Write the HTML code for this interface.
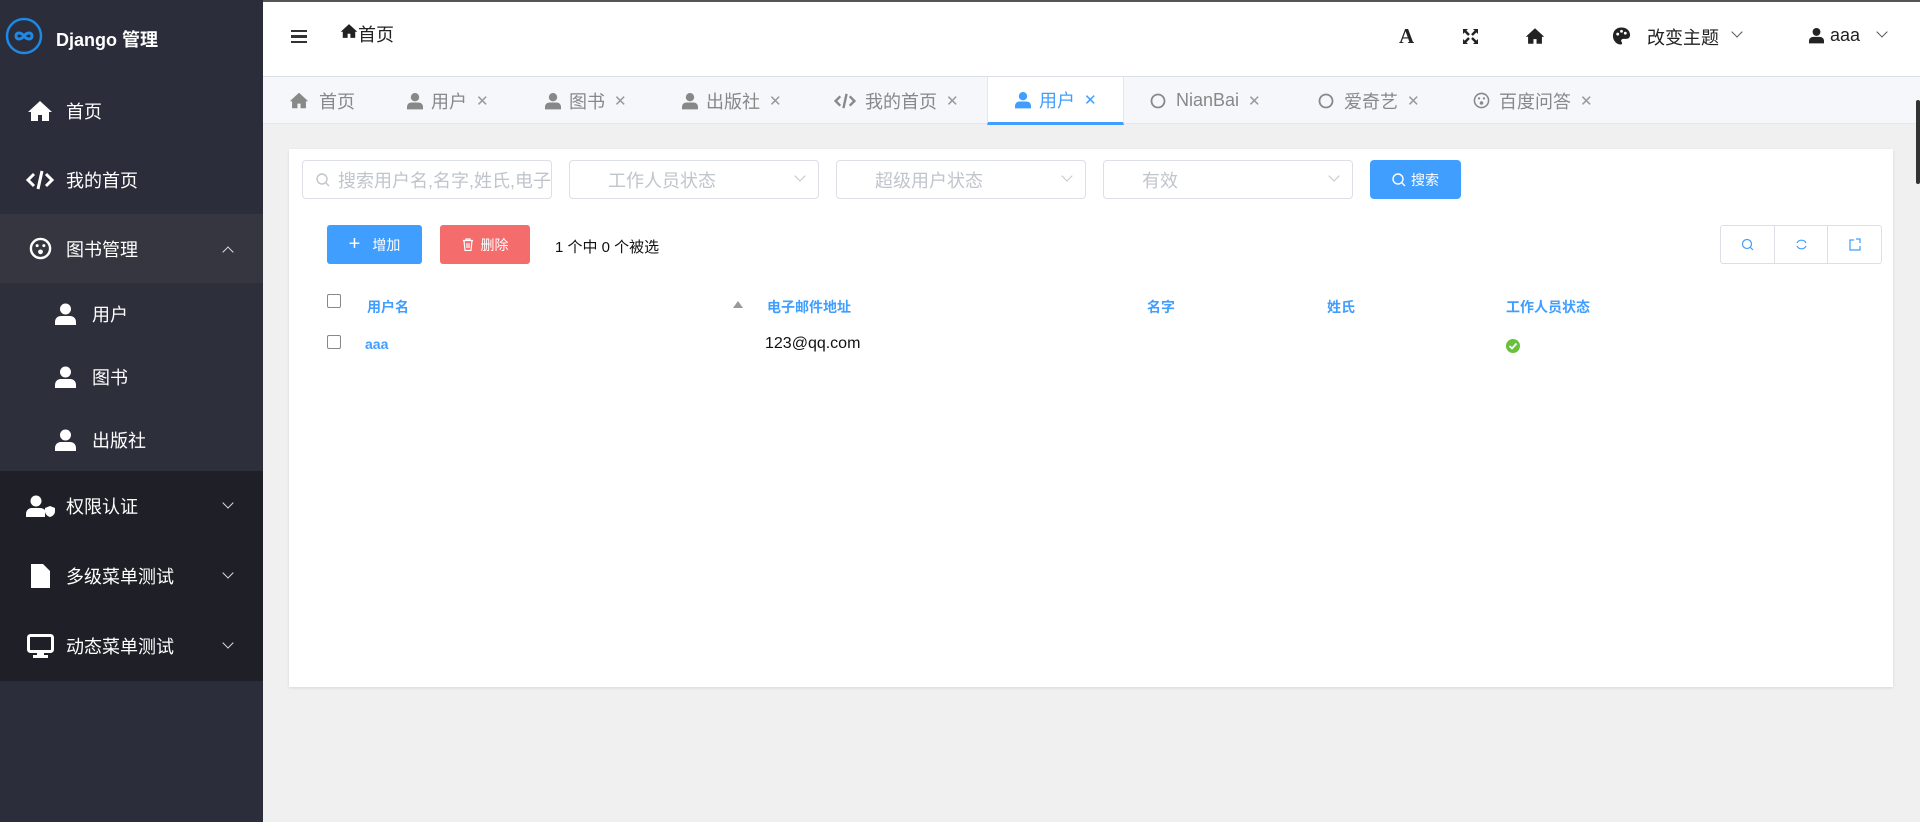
<!DOCTYPE html>
<html><head><meta charset="utf-8"><style>
*{box-sizing:border-box;margin:0;padding:0}
body{width:1920px;height:822px;overflow:hidden;background:#f0f0f0;font-family:"Liberation Sans","Noto Sans CJK SC",sans-serif;position:relative}
.abs{position:absolute}
#side{left:0;top:0;width:263px;height:822px;background:#2b2d3a}
.mi{position:absolute;left:0;width:263px;color:#fff;font-size:18px;display:flex;align-items:center}
.mi svg{position:absolute}
.mi span{position:absolute;left:66px}
.chev{position:absolute;left:224px;width:8px;height:8px;border-right:1.5px solid #ddd;border-bottom:1.5px solid #ddd;transform:rotate(45deg)}
.up{transform:rotate(-135deg)}
#top{left:263px;top:2px;width:1657px;height:74px;background:#fff}
#tabs{left:263px;top:76px;width:1657px;height:48px;background:#f5f7fa;border-top:1px solid #dcdfe6;border-bottom:1px solid #e4e7ed}
.tab{position:absolute;top:0;height:47px;display:flex;align-items:center;font-size:18px;color:#888}
.tab .x{font-size:15px;margin-left:9px;color:#999}
#card{left:289px;top:149px;width:1604px;height:538px;background:#fff;box-shadow:0 1px 3px rgba(0,0,0,.1)}
.inp{position:absolute;top:11px;height:39px;border:1px solid #dcdfe6;border-radius:4px;color:#c0c4cc;font-size:18px;display:flex;align-items:center}
.sel .v{position:absolute;right:14px;top:11px;width:8px;height:8px;border-right:1.5px solid #c0c4cc;border-bottom:1.5px solid #c0c4cc;transform:rotate(45deg)}
.th{position:absolute;top:148px;font-size:14px;font-weight:bold;color:#409eff}
.cb{position:absolute;width:14px;height:14px;border:1px solid #888;border-radius:2px;background:#fff}
</style></head><body>
<div class="abs" style="left:0;top:0;width:1920px;height:2px;background:#555"></div>
<div id="side" class="abs">
 <svg class="abs" style="left:5px;top:17px" width="38" height="38" viewBox="0 0 38 38"><circle cx="19" cy="19" r="17" fill="none" stroke="#1e88e5" stroke-width="2.5"/><path d="M19 19c-3-4-8-4-8 0s5 4 8 0c3-4 8-4 8 0s-5 4-8 0" fill="none" stroke="#1e88e5" stroke-width="3"/></svg>
 <div class="abs" style="left:56px;top:26px;color:#fff;font-size:18px;font-weight:bold">Django 管理</div>
 <div class="mi" style="top:76px;height:69px"><svg style="left:27px" width="26" height="22" viewBox="0 0 26 22"><path d="M13 1L1 12h3v9h7v-6h4v6h7v-9h3z" fill="#fff"/></svg><span>首页</span></div>
 <div class="mi" style="top:145px;height:69px"><svg style="left:26px" width="28" height="20" viewBox="0 0 28 20"><path d="M8 4L2 10l6 6M20 4l6 6-6 6M16 1l-4 18" stroke="#fff" stroke-width="3" fill="none"/></svg><span>我的首页</span></div>
 <div class="mi" style="top:214px;height:69px;background:#35363f"><svg style="left:29px" width="23" height="23" viewBox="0 0 24 24"><circle cx="12" cy="12" r="10" fill="none" stroke="#fff" stroke-width="2.5"/><circle cx="8.5" cy="9" r="1.6" fill="#fff"/><circle cx="15.5" cy="9" r="1.6" fill="#fff"/><circle cx="12" cy="15.5" r="2.5" fill="#fff"/></svg><span>图书管理</span><i class="chev up" style="top:34px"></i></div>
 <div class="abs" style="left:0;top:283px;width:263px;height:188px;background:#2d2f3b"></div>
 <div class="mi" style="top:283px;height:62px"><svg style="left:55px" width="21" height="22" viewBox="0 0 21 22"><circle cx="10.5" cy="6" r="5.5" fill="#fff"/><path d="M0 22v-3c0-4 3-6 6-6h9c3 0 6 2 6 6v3z" fill="#fff"/></svg><span style="left:92px">用户</span></div>
 <div class="mi" style="top:345px;height:63px"><svg style="left:55px" width="21" height="22" viewBox="0 0 21 22"><circle cx="10.5" cy="6" r="5.5" fill="#fff"/><path d="M0 22v-3c0-4 3-6 6-6h9c3 0 6 2 6 6v3z" fill="#fff"/></svg><span style="left:92px">图书</span></div>
 <div class="mi" style="top:408px;height:63px"><svg style="left:55px" width="21" height="22" viewBox="0 0 21 22"><circle cx="10.5" cy="6" r="5.5" fill="#fff"/><path d="M0 22v-3c0-4 3-6 6-6h9c3 0 6 2 6 6v3z" fill="#fff"/></svg><span style="left:92px">出版社</span></div>
 <div class="abs" style="left:0;top:471px;width:263px;height:210px;background:#1f1f27"></div>
 <div class="mi" style="top:471px;height:70px"><svg style="left:26px" width="30" height="22" viewBox="0 0 30 22"><circle cx="10" cy="6" r="5.5" fill="#fff"/><path d="M0 22v-3c0-4 3-6 6-6h8c2 0 4 1 5 2v7z" fill="#fff"/><path d="M24 11l5 2v3c0 3-2 5-5 6-3-1-5-3-5-6v-3z" fill="#fff"/></svg><span>权限认证</span><i class="chev" style="top:28px"></i></div>
 <div class="mi" style="top:541px;height:70px"><svg style="left:31px" width="19" height="24" viewBox="0 0 19 24"><path d="M0 0h12l7 7v17H0z" fill="#fff"/></svg><span>多级菜单测试</span><i class="chev" style="top:28px"></i></div>
 <div class="mi" style="top:611px;height:70px"><svg style="left:27px" width="27" height="24" viewBox="0 0 27 24"><rect x="1.5" y="1.5" width="24" height="16" rx="2" fill="none" stroke="#fff" stroke-width="3"/><rect x="10" y="18" width="7" height="3" fill="#fff"/><rect x="6" y="21" width="15" height="3" fill="#fff"/></svg><span>动态菜单测试</span><i class="chev" style="top:28px"></i></div>
</div>
<div id="top" class="abs">
 <div class="abs" style="left:28px;top:28px;width:16px;height:13px;border-top:2.5px solid #333;border-bottom:2.5px solid #333"><div style="margin-top:3px;height:2.5px;background:#333"></div></div>
 <svg class="abs" style="left:77px;top:21px" width="18" height="16" viewBox="0 0 26 22"><path d="M13 1L1 12h3v9h7v-6h4v6h7v-9h3z" fill="#222"/></svg>
 <div class="abs" style="left:95px;top:19px;font-size:18px;color:#222">首页</div>
 <div class="abs" style="left:1136px;top:22px;font-size:21px;font-weight:bold;font-family:'Liberation Serif',serif;color:#222">A</div>
 <svg class="abs" style="left:1199px;top:26px" width="17" height="17" viewBox="0 0 17 17"><path d="M1 1h5L1 6zM16 1h-5l5 5zM1 16h5l-5-5zM16 16h-5l5-5z" fill="#222"/><path d="M3 3l4 4M14 3l-4 4M3 14l4-4M14 14l-4-4" stroke="#222" stroke-width="2.5"/></svg>
 <svg class="abs" style="left:1262px;top:25px" width="20" height="18" viewBox="0 0 26 22"><path d="M13 1L1 12h3v9h7v-6h4v6h7v-9h3z" fill="#222"/></svg>
 <svg class="abs" style="left:1349px;top:24px" width="19" height="20" viewBox="0 0 20 20"><path d="M10 1C4 1 1 5 1 10s4 9 8 9c2 0 2-2 1-3s0-3 2-3h3c3 0 4-2 4-4 0-5-4-8-9-8z" fill="#222"/><circle cx="6" cy="8" r="1.5" fill="#fff"/><circle cx="10" cy="5" r="1.5" fill="#fff"/><circle cx="14" cy="7" r="1.5" fill="#fff"/></svg>
 <div class="abs" style="left:1384px;top:22px;font-size:18px;color:#222">改变主题</div>
 <i class="abs" style="left:1470px;top:26px;width:8px;height:8px;border-right:1.3px solid #555;border-bottom:1.3px solid #555;transform:rotate(45deg)"></i>
 <svg class="abs" style="left:1546px;top:25px" width="15" height="17" viewBox="0 0 21 22"><circle cx="10.5" cy="6" r="5.5" fill="#222"/><path d="M0 22v-3c0-4 3-6 6-6h9c3 0 6 2 6 6v3z" fill="#222"/></svg>
 <div class="abs" style="left:1567px;top:23px;font-size:18px;color:#222">aaa</div>
 <i class="abs" style="left:1615px;top:26px;width:8px;height:8px;border-right:1.3px solid #555;border-bottom:1.3px solid #555;transform:rotate(45deg)"></i>
</div>
<div id="tabs" class="abs">
 <div class="tab" style="left:26px"><svg width="20" height="17" viewBox="0 0 26 22" style="margin-right:10px"><path d="M13 1L1 12h3v9h7v-6h4v6h7v-9h3z" fill="#888"/></svg>首页</div>
 <div class="tab" style="left:144px"><svg width="16" height="18" viewBox="0 0 21 22" style="margin-right:8px"><circle cx="10.5" cy="6" r="5.5" fill="#888"/><path d="M0 22v-3c0-4 3-6 6-6h9c3 0 6 2 6 6v3z" fill="#888"/></svg>用户<span class="x">✕</span></div>
 <div class="tab" style="left:282px"><svg width="16" height="18" viewBox="0 0 21 22" style="margin-right:8px"><circle cx="10.5" cy="6" r="5.5" fill="#888"/><path d="M0 22v-3c0-4 3-6 6-6h9c3 0 6 2 6 6v3z" fill="#888"/></svg>图书<span class="x">✕</span></div>
 <div class="tab" style="left:419px"><svg width="16" height="18" viewBox="0 0 21 22" style="margin-right:8px"><circle cx="10.5" cy="6" r="5.5" fill="#888"/><path d="M0 22v-3c0-4 3-6 6-6h9c3 0 6 2 6 6v3z" fill="#888"/></svg>出版社<span class="x">✕</span></div>
 <div class="tab" style="left:571px"><svg width="22" height="16" viewBox="0 0 28 20" style="margin-right:9px"><path d="M8 4L2 10l6 6M20 4l6 6-6 6M16 1l-4 18" stroke="#888" stroke-width="3" fill="none"/></svg>我的首页<span class="x">✕</span></div>
 <div class="tab" style="left:724px;width:137px;background:#fff;color:#409eff;border-left:1px solid #e4e7ed;border-right:1px solid #e4e7ed;border-bottom:3px solid #409eff;height:48px;padding-left:27px"><svg width="16" height="18" viewBox="0 0 21 22" style="margin-right:8px"><circle cx="10.5" cy="6" r="5.5" fill="#409eff"/><path d="M0 22v-3c0-4 3-6 6-6h9c3 0 6 2 6 6v3z" fill="#409eff"/></svg>用户<span class="x" style="color:#409eff">✕</span></div>
 <div class="tab" style="left:887px"><svg width="16" height="16" style="margin-right:10px"><circle cx="8" cy="8" r="6.5" fill="none" stroke="#888" stroke-width="1.8"/></svg>NianBai<span class="x">✕</span></div>
 <div class="tab" style="left:1055px"><svg width="16" height="16" style="margin-right:10px"><circle cx="8" cy="8" r="6.5" fill="none" stroke="#888" stroke-width="1.8"/></svg>爱奇艺<span class="x">✕</span></div>
 <div class="tab" style="left:1210px"><svg width="17" height="17" viewBox="0 0 24 24" style="margin-right:9px"><circle cx="12" cy="12" r="10" fill="none" stroke="#888" stroke-width="2.2"/><circle cx="8.5" cy="9" r="1.6" fill="#888"/><circle cx="15.5" cy="9" r="1.6" fill="#888"/><circle cx="12" cy="15.5" r="2.5" fill="#888"/></svg>百度问答<span class="x">✕</span></div>
</div>
<div class="abs" style="left:1916px;top:100px;width:4px;height:84px;background:#333;border-radius:3px"></div>
<div id="card" class="abs">
 <div class="inp" style="left:13px;width:250px;padding-left:13px"><svg width="14" height="14" style="margin-right:8px"><circle cx="6" cy="6" r="5" fill="none" stroke="#c0c4cc" stroke-width="1.4"/><path d="M10 10l3 3" stroke="#c0c4cc" stroke-width="1.4"/></svg>搜索用户名,名字,姓氏,电子</div>
 <div class="inp sel" style="left:280px;width:250px;padding-left:38px">工作人员状态<i class="v"></i></div>
 <div class="inp sel" style="left:547px;width:250px;padding-left:38px">超级用户状态<i class="v"></i></div>
 <div class="inp sel" style="left:814px;width:250px;padding-left:38px">有效<i class="v"></i></div>
 <div class="inp" style="left:1081px;width:91px;background:#409eff;border-color:#409eff;color:#fff;font-size:14px;justify-content:center"><svg width="14" height="14" style="margin-right:5px"><circle cx="6" cy="6" r="5" fill="none" stroke="#fff" stroke-width="1.4"/><path d="M10 10l3 3" stroke="#fff" stroke-width="1.4"/></svg>搜索</div>
 <div class="abs" style="left:38px;top:76px;width:95px;height:39px;background:#409eff;border-radius:3px;color:#fff;font-size:14px;display:flex;align-items:center;justify-content:center"><span style="font-size:20px;margin-right:12px;font-weight:300">+</span>增加</div>
 <div class="abs" style="left:151px;top:76px;width:90px;height:39px;background:#f56c6c;border-radius:3px;color:#fff;font-size:14px;display:flex;align-items:center;justify-content:center"><svg width="12" height="13" viewBox="0 0 12 13" style="margin-right:7px"><path d="M1 2.5h10M4 2.5V1h4v1.5M2 2.5l1 10h6l1-10M5 5v5M7 5v5" stroke="#fff" stroke-width="1.2" fill="none"/></svg>删除</div>
 <div class="abs" style="left:266px;top:87px;font-size:15px;color:#111">1 个中 0 个被选</div>
 <div class="abs" style="left:1431px;top:76px;width:162px;height:39px;border:1px solid #dcdfe6;border-radius:3px;display:flex">
  <div style="flex:1;border-right:1px solid #dcdfe6;display:flex;align-items:center;justify-content:center"><svg width="13" height="13"><circle cx="6" cy="6" r="4.5" fill="none" stroke="#409eff" stroke-width="1.2"/><path d="M9 9l3 3" stroke="#409eff" stroke-width="1.2"/></svg></div>
  <div style="flex:1;border-right:1px solid #dcdfe6;display:flex;align-items:center;justify-content:center"><svg width="13" height="13"><path d="M11 5A5 5 0 0 0 2 5M2 8a5 5 0 0 0 9 0" stroke="#409eff" stroke-width="1.2" fill="none"/></svg></div>
  <div style="flex:1;display:flex;align-items:center;justify-content:center"><svg width="13" height="13"><path d="M6 2H2v10h10V8M8 1h4v4" stroke="#409eff" stroke-width="1.2" fill="none"/></svg></div>
 </div>
 <div class="cb" style="left:38px;top:145px"></div>
 <div class="th" style="left:78px">用户名</div>
 <div class="abs" style="left:444px;top:152px;width:0;height:0;border-left:5px solid transparent;border-right:5px solid transparent;border-bottom:7px solid #999"></div>
 <div class="th" style="left:478px">电子邮件地址</div>
 <div class="th" style="left:858px">名字</div>
 <div class="th" style="left:1038px">姓氏</div>
 <div class="th" style="left:1217px">工作人员状态</div>
 <div class="cb" style="left:38px;top:186px"></div>
 <div class="abs" style="left:76px;top:187px;font-size:14px;font-weight:bold;color:#409eff">aaa</div>
 <div class="abs" style="left:476px;top:186px;font-size:16px;color:#111">123@qq.com</div>
 <svg class="abs" style="left:1217px;top:190px" width="14" height="14"><circle cx="7" cy="7" r="7" fill="#67c23a"/><path d="M3.5 7l2.5 2.5 4.5-5" stroke="#fff" stroke-width="1.8" fill="none"/></svg>
</div>
</body></html>
